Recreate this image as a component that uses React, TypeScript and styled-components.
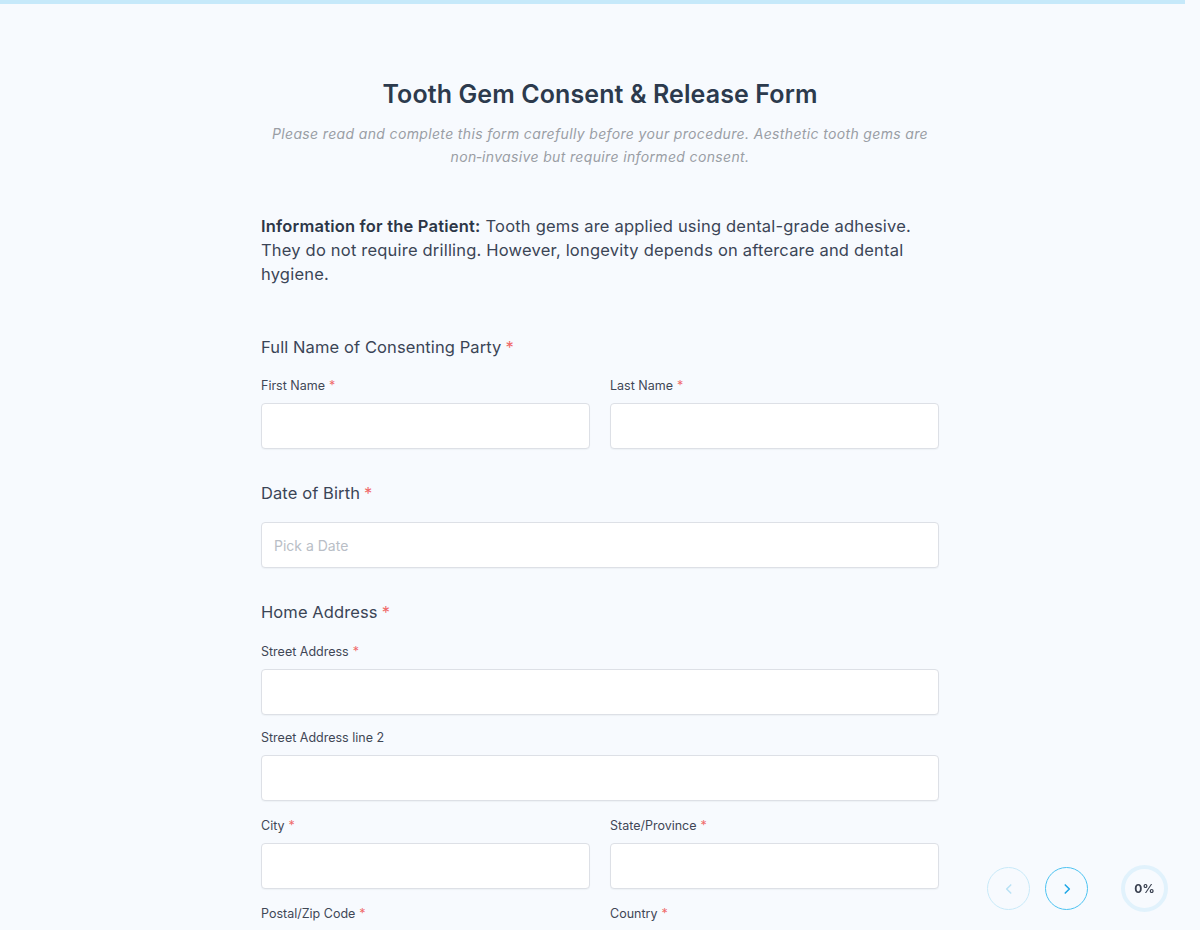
import styled, { createGlobalStyle } from "styled-components";

const GlobalStyle = createGlobalStyle`
  html, body {
    margin: 0;
    padding: 0;
    background: #f7fafe;
    font-family: "Inter", "Noto Sans", sans-serif;
    color: #36404f;
    overflow: hidden;
  }
  * { box-sizing: border-box; }
`;

const TopBar = styled.div`
  height: 4px;
  margin-right: 15px;
  background: #c6e9fa;
`;

const Page = styled.main`
  display: flex;
  justify-content: center;
  padding-top: 72px;
`;

const FormColumn = styled.div`
  width: 678px;
  display: flex;
  flex-direction: column;
`;

const Title = styled.h1`
  margin: 0;
  text-align: center;
  font-size: 25px;
  font-weight: 600;
  color: #2c3a4d;
  letter-spacing: 0.1px;
  line-height: 36px;
`;

const Subtitle = styled.p`
  margin: 10px auto 0;
  width: 670px;
  text-align: center;
  font-size: 14px;
  font-style: italic;
  line-height: 23px;
  letter-spacing: 0.35px;
  color: #9a9ea5;
`;

const Info = styled.p`
  margin: 46px 0 0;
  font-size: 16.5px;
  line-height: 24px;
  letter-spacing: 0.2px;
  color: #3b4556;

  strong {
    font-weight: 600;
    color: #2c3647;
    margin-right: 5px;
  }
`;

const Section = styled.section<{ $top?: number }>`
  margin-top: ${(p) => p.$top ?? 0}px;
  display: flex;
  flex-direction: column;
`;

const SectionLabel = styled.div`
  font-size: 16.5px;
  line-height: 24px;
  letter-spacing: 0.1px;
  color: #3b4556;
`;

const Star = styled.span`
  color: #f06a6a;
  margin-left: 4px;
`;

const Row = styled.div`
  display: grid;
  grid-template-columns: 1fr 1fr;
  column-gap: 20px;
`;

const Field = styled.div<{ $top?: number }>`
  display: flex;
  flex-direction: column;
  margin-top: ${(p) => p.$top ?? 0}px;
`;

const FieldLabel = styled.label`
  font-size: 12.5px;
  line-height: 18px;
  color: #3f4756;
  margin-bottom: 8px;
`;

const Input = styled.input`
  height: 46px;
  width: 100%;
  border: 1px solid #dde0e6;
  border-radius: 4px;
  background: #ffffff;
  box-shadow: 0 1px 1px rgba(30, 40, 60, 0.04);
  padding: 0 12px;
  font-family: inherit;
  font-size: 14px;
  color: #36404f;
  outline: none;

  &::placeholder {
    color: #b9bec6;
  }
`;

const NavDock = styled.div`
  position: fixed;
  right: 32px;
  top: 865px;
  display: flex;
  align-items: center;
`;

const NavButton = styled.button<{ $active?: boolean }>`
  width: 43px;
  height: 43px;
  border-radius: 50%;
  background: transparent;
  border: 1.5px solid ${(p) => (p.$active ? "#4cc2f0" : "#c8e9f8")};
  color: ${(p) => (p.$active ? "#1ba6e6" : "#b9e2f5")};
  display: flex;
  align-items: center;
  justify-content: center;
  padding: 0;
  margin-right: 15px;
`;

const Progress = styled.div`
  width: 47px;
  height: 47px;
  border-radius: 50%;
  border: 4px solid #e1f2fc;
  display: flex;
  align-items: center;
  justify-content: center;
  font-size: 12px;
  font-weight: 700;
  color: #3a4150;
  margin-left: 18px;
`;

const Chevron = ({ dir }: { dir: "left" | "right" }) => (
  <svg width="14" height="14" viewBox="0 0 24 24" fill="none" stroke="currentColor" strokeWidth="2.6" strokeLinecap="round" strokeLinejoin="round">
    {dir === "left" ? <path d="M15 5l-7 7 7 7" /> : <path d="M9 5l7 7-7 7" />}
  </svg>
);

const Req = () => <Star>*</Star>;

export default function App() {
  return (
    <>
      <GlobalStyle />
      <TopBar />
      <Page>
        <FormColumn>
          <Title>Tooth Gem Consent &amp; Release Form</Title>
          <Subtitle>
            Please read and complete this form carefully before your procedure. Aesthetic tooth gems are
            non&#8209;invasive but require informed consent.
          </Subtitle>
          <Info>
            <strong>Information for the Patient:</strong>Tooth gems are applied using dental-grade adhesive.
            They do not require drilling. However, longevity depends on aftercare and dental hygiene.
          </Info>

          <Section $top={49}>
            <SectionLabel>
              Full Name of Consenting Party<Req />
            </SectionLabel>
            <Row>
              <Field $top={18}>
                <FieldLabel>First Name<Req /></FieldLabel>
                <Input />
              </Field>
              <Field $top={18}>
                <FieldLabel>Last Name<Req /></FieldLabel>
                <Input />
              </Field>
            </Row>
          </Section>

          <Section $top={32}>
            <SectionLabel>
              Date of Birth<Req />
            </SectionLabel>
            <Field $top={17}>
              <Input placeholder="Pick a Date" />
            </Field>
          </Section>

          <Section $top={32}>
            <SectionLabel>
              Home Address<Req />
            </SectionLabel>
            <Field $top={19}>
              <FieldLabel>Street Address<Req /></FieldLabel>
              <Input />
            </Field>
            <Field $top={14}>
              <FieldLabel>Street Address line 2</FieldLabel>
              <Input />
            </Field>
            <Row>
              <Field $top={16}>
                <FieldLabel>City<Req /></FieldLabel>
                <Input />
              </Field>
              <Field $top={16}>
                <FieldLabel>State/Province<Req /></FieldLabel>
                <Input />
              </Field>
            </Row>
            <Row>
              <Field $top={16}>
                <FieldLabel>Postal/Zip Code<Req /></FieldLabel>
                <Input />
              </Field>
              <Field $top={16}>
                <FieldLabel>Country<Req /></FieldLabel>
                <Input />
              </Field>
            </Row>
          </Section>
        </FormColumn>
      </Page>

      <NavDock>
        <NavButton aria-label="Previous">
          <Chevron dir="left" />
        </NavButton>
        <NavButton $active aria-label="Next">
          <Chevron dir="right" />
        </NavButton>
        <Progress>0%</Progress>
      </NavDock>
    </>
  );
}
